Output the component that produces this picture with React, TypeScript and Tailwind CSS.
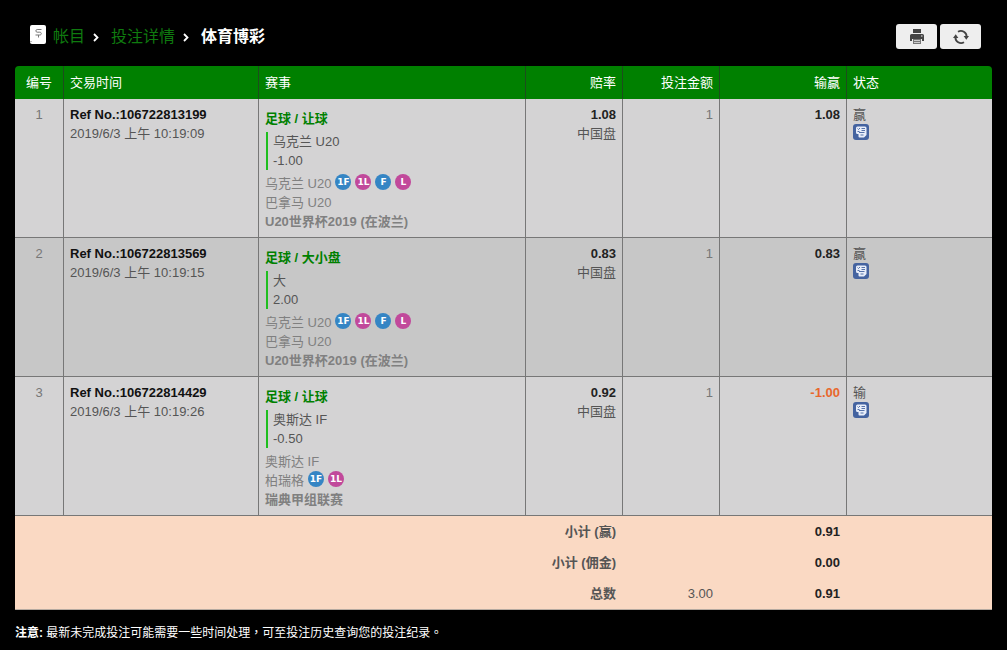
import React from 'react';

type Tag = '1F' | '1L' | 'F' | 'L';

interface Team {
  name: string;
  tags: Tag[];
}

interface Bet {
  id: number;
  refNo: string;
  time: string;
  market: string;
  pick: string;
  line: string;
  teams: Team[];
  league: string;
  odds: string;
  stake: string;
  result: string;
  status: string;
}

const bets: Bet[] = [
  {
    id: 1,
    refNo: '106722813199',
    time: '2019/6/3 上午 10:19:09',
    market: '足球 / 让球',
    pick: '乌克兰 U20',
    line: '-1.00',
    teams: [
      { name: '乌克兰 U20', tags: ['1F', '1L', 'F', 'L'] },
      { name: '巴拿马 U20', tags: [] },
    ],
    league: 'U20世界杯2019 (在波兰)',
    odds: '1.08',
    stake: '1',
    result: '1.08',
    status: '赢',
  },
  {
    id: 2,
    refNo: '106722813569',
    time: '2019/6/3 上午 10:19:15',
    market: '足球 / 大小盘',
    pick: '大',
    line: '2.00',
    teams: [
      { name: '乌克兰 U20', tags: ['1F', '1L', 'F', 'L'] },
      { name: '巴拿马 U20', tags: [] },
    ],
    league: 'U20世界杯2019 (在波兰)',
    odds: '0.83',
    stake: '1',
    result: '0.83',
    status: '赢',
  },
  {
    id: 3,
    refNo: '106722814429',
    time: '2019/6/3 上午 10:19:26',
    market: '足球 / 让球',
    pick: '奥斯达 IF',
    line: '-0.50',
    teams: [
      { name: '奥斯达 IF', tags: [] },
      { name: '柏瑞格', tags: ['1F', '1L'] },
    ],
    league: '瑞典甲组联赛',
    odds: '0.92',
    stake: '1',
    result: '-1.00',
    status: '输',
  },
];

const totals = [
  { label: '小计 (赢)', stake: '', result: '0.91' },
  { label: '小计 (佣金)', stake: '', result: '0.00' },
  { label: '总数', stake: '3.00', result: '0.91' },
];

const LedgerIcon: React.FC = () => (
  <svg width="16" height="19" viewBox="0 0 16 19" className="mt-px self-start" aria-hidden="true">
    <rect width="16" height="19" rx="2" fill="#fff" />
    <path
      d="M11.500 4.500H7.200C5.400 4.500 5.400 7.200 7.200 7.200h2.600c2 0 2 2.800 0 2.800H5.500M8.500 10v2.500"
      fill="none"
      stroke="#777"
      strokeWidth="1"
    />
    <path d="M0 16.500h2" stroke="#bbb" strokeWidth="1" />
  </svg>
);

const Chevron: React.FC = () => (
  <svg width="6" height="9" viewBox="0 0 6 9" className="mr-3 ml-2" aria-hidden="true">
    <path d="M1 1l3.500 3.500L1 8" fill="none" stroke="#fff" strokeWidth="1.800" />
  </svg>
);

const PrinterIcon: React.FC = () => (
  <svg width="14" height="15" viewBox="0 0 14 15" fill="#444" aria-hidden="true">
    <path d="M3 0h8v4H3z" />
    <path d="M1.500 5h11A1.500 1.500 0 0 1 14 6.500V12h-2V9.500H2V12H0V6.500A1.500 1.500 0 0 1 1.500 5z" />
    <path d="M2 8h10v2H2z" />
    <path d="M3 10h8v5H3z" fill="#777" />
    <path d="M11 7h1.500" stroke="#eee" strokeWidth="1" />
    <path d="M4 11.500h6M4 13.500h6" stroke="#ccc" strokeWidth="1" />
  </svg>
);

const RefreshIcon: React.FC = () => (
  <svg width="16" height="14" viewBox="0 0 16 14" aria-hidden="true">
    <path
      d="M5 1.800A5.700 5.700 0 0 1 13.600 7M11 12.200A5.700 5.700 0 0 1 2.400 7"
      fill="none"
      stroke="#444"
      strokeWidth="1.800"
    />
    <path d="M10.600 6H16l-2.700 3.800zM0 8h5.400L2.700 4.200z" fill="#444" />
  </svg>
);

const DetailIcon: React.FC = () => (
  <svg width="16" height="16" viewBox="0 0 16 16" aria-hidden="true">
    <rect width="16" height="16" rx="3" fill="#4463a0" />
    <path
      d="M4.500 2.500H12a1.500 1.500 0 0 1 1.500 1.500v7L11 13.500H6.500a1 1 0 0 1-1-1V10H4.500A1.500 1.500 0 0 1 3 8.500V4a1.500 1.500 0 0 1 1.500-1.500z"
      fill="#e8eefa"
    />
    <path
      d="M4.500 4.500l1 1 1.500-1.500M8.500 4.500H12M4.500 7.500h2M8.500 6.500H12M6 8.500h5.500M7.500 11h3"
      fill="none"
      stroke="#4463a0"
      strokeWidth="0.900"
    />
  </svg>
);

const TagBadge: React.FC<{ tag: Tag }> = ({ tag }) => (
  <span
    className={`flex h-4 w-4 items-center justify-center rounded-full font-['DejaVu_Sans',sans-serif] text-[9px] leading-4 font-bold text-white ${
      tag.endsWith('F') ? 'bg-[#3585c4]' : 'bg-[#c1499b]'
    }`}
  >
    {tag}
  </span>
);

const BetRow: React.FC<{ bet: Bet }> = ({ bet }) => (
  <tr className="align-top odd:bg-[#d4d3d4] even:bg-[#c7c7c7]">
    <td className="border-r border-b border-[#777] px-1.5 py-1.5 text-center text-[#777]">{bet.id}</td>
    <td className="border-r border-b border-[#777] px-1.5 py-1.5">
      <div className="font-bold text-[#111]">Ref No.:{bet.refNo}</div>
      <div>{bet.time}</div>
    </td>
    <td className="border-r border-b border-[#777] px-1.5 pt-2.5 pb-1.5">
      <div className="font-bold text-[#008000]">{bet.market}</div>
      <div className="my-1 ml-px border-l-2 border-[#1fbf1f] pl-[5px]">
        <div>{bet.pick}</div>
        <div>{bet.line}</div>
      </div>
      <div className="text-[#808080]">
        {bet.teams.map((team) => (
          <div key={team.name} className="flex items-start gap-1">
            <span>{team.name}</span>
            {team.tags.map((tag) => (
              <TagBadge key={tag} tag={tag} />
            ))}
          </div>
        ))}
        <div className="font-bold">{bet.league}</div>
      </div>
    </td>
    <td className="border-r border-b border-[#777] px-1.5 py-1.5 text-right">
      <div className="font-bold text-[#222]">{bet.odds}</div>
      <div>中国盘</div>
    </td>
    <td className="border-r border-b border-[#777] px-1.5 py-1.5 text-right text-[#777]">{bet.stake}</td>
    <td
      className={`border-r border-b border-[#777] px-1.5 py-1.5 text-right font-bold ${
        bet.result.startsWith('-') ? 'text-[#e8672c]' : 'text-[#222]'
      }`}
    >
      {bet.result}
    </td>
    <td className="border-b border-[#777] px-1.5 py-1.5">
      <div>{bet.status}</div>
      <button type="button" aria-label="详情" className="block cursor-pointer">
        <DetailIcon />
      </button>
    </td>
  </tr>
);

const App: React.FC = () => {
  return (
    <div
      lang="zh-CN"
      className="min-h-screen bg-black px-[15px] pt-6 pb-2 font-['Liberation_Sans','Noto_Sans_CJK_SC',sans-serif] text-[13px] leading-[19px] text-[#555]"
    >
      <header className="flex h-[42px] items-start justify-between pr-[11px] pl-[15px]">
        <nav className="flex items-center text-base leading-[26px] text-[#0f7a0f]">
          <LedgerIcon />
          <a href="#account" className="ml-[7px]">帐目</a>
          <Chevron />
          <a href="#bets">投注详情</a>
          <Chevron />
          <span className="font-bold text-white">体育博彩</span>
        </nav>
        <div className="flex gap-[3px]">
          <button
            type="button"
            aria-label="打印"
            className="flex h-[25px] w-[41px] items-center justify-center rounded-[3px] bg-[#eee]"
          >
            <PrinterIcon />
          </button>
          <button
            type="button"
            aria-label="刷新"
            className="flex h-[25px] w-[41px] items-center justify-center rounded-[3px] bg-[#eee]"
          >
            <RefreshIcon />
          </button>
        </div>
      </header>

      <table className="w-full table-fixed border-separate border-spacing-0 overflow-hidden rounded-t border-b border-[#b5aaa0]">
        <colgroup>
          <col className="w-[49px]" />
          <col className="w-[195px]" />
          <col />
          <col className="w-[97px]" />
          <col className="w-[97px]" />
          <col className="w-[127px]" />
          <col className="w-[145px]" />
        </colgroup>
        <thead className="bg-[#008000] text-left text-white">
          <tr>
            <th className="border-r border-[#1d4d1d] px-1.5 py-[7px] text-center font-normal">编号</th>
            <th className="border-r border-[#1d4d1d] px-1.5 py-[7px] font-normal">交易时间</th>
            <th className="border-r border-[#1d4d1d] px-1.5 py-[7px] font-normal">赛事</th>
            <th className="border-r border-[#1d4d1d] px-1.5 py-[7px] text-right font-normal">赔率</th>
            <th className="border-r border-[#1d4d1d] px-1.5 py-[7px] text-right font-normal">投注金额</th>
            <th className="border-r border-[#1d4d1d] px-1.5 py-[7px] text-right font-normal">输赢</th>
            <th className="px-1.5 py-[7px] font-normal">状态</th>
          </tr>
        </thead>
        <tbody>
          {bets.map((bet) => (
            <BetRow key={bet.id} bet={bet} />
          ))}
        </tbody>
        <tfoot className="bg-[#fad9c3] text-right">
          {totals.map((total) => (
            <tr key={total.label}>
              <th colSpan={4} className="py-1.5 pr-[7px] font-bold">{total.label}</th>
              <td className="py-1.5 pr-[7px]">{total.stake}</td>
              <td className="py-1.5 pr-[7px] font-bold text-[#222]">{total.result}</td>
              <td />
            </tr>
          ))}
        </tfoot>
      </table>

      <p
        lang="zh-TW"
        className="mt-3.5 font-['Liberation_Sans','Noto_Sans_CJK_TC',sans-serif] text-xs leading-[19px] text-white"
      >
        <strong>注意:</strong> 最新未完成投注可能需要一些时间处理，可至投注历史查询您的投注纪录。
      </p>
    </div>
  );
};

export default App;
